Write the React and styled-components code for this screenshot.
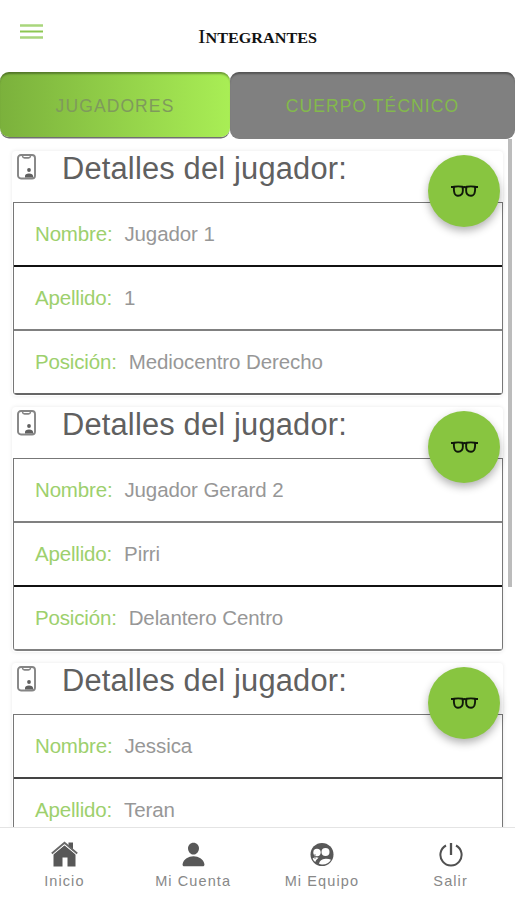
import React from 'react'
import styled, { createGlobalStyle } from 'styled-components'
import { IoPerson } from 'react-icons/io5'

const players = [
  { name: 'Jugador 1', surname: '1', position: 'Mediocentro Derecho', lines: ['#111', '#808080', '#666'] },
  { name: 'Jugador Gerard 2', surname: 'Pirri', position: 'Delantero Centro', lines: ['#808080', '#111', '#808080'] },
  { name: 'Jessica', surname: 'Teran', lines: ['#444', '#808080', '#666'] },
]

const MenuIcon = () => (
  <svg width="23" height="16" viewBox="0 0 23 16">
    <path d="M0 1.500h23M0 13.500h23" stroke="#a9d67c" strokeWidth="2.400" />
    <path d="M0 7.500h23" stroke="#8cc751" strokeWidth="2" />
  </svg>
)

const BadgeIcon = () => (
  <svg width="19" height="26" viewBox="0 0 19 26" fill="none" stroke="#858585">
    <rect x="1" y="1" width="17" height="23.500" rx="3" strokeWidth="1.900" />
    <path d="M5.500 2q.3 1.900 2 1.900h4q1.700 0 2-1.900" strokeWidth="1.600" />
    <circle cx="12" cy="16" r="1.900" fill="#606060" stroke="none" />
    <path d="M8 23.500v-1.500q0-2.600 4-2.600t4 2.600v1.500z" fill="#606060" stroke="none" />
  </svg>
)

const GlassesIcon = () => (
  <svg width="27" height="13" viewBox="0 0 27 13" fill="none" stroke="#10180a">
    <path d="M0 2h4M23 2h4" strokeWidth="2.200" />
    <path d="M3 1.800Q7 .9 11.400 1.800Q12.600 6.500 10.800 9.200Q9.500 10.800 7 10.800Q4.400 10.800 3.500 8.300Q2.600 5.500 3 1.800z" strokeWidth="1.900" />
    <path d="M24 1.800Q20 .9 15.600 1.800Q14.400 6.500 16.200 9.200Q17.500 10.800 20 10.800Q22.600 10.800 23.500 8.300Q24.400 5.500 24 1.800z" strokeWidth="1.900" />
    <path d="M11.500 2.700q2-1.200 4 0" strokeWidth="2" />
  </svg>
)

const HomeIcon = () => (
  <svg width="27" height="27" viewBox="0 0 27 27" fill="#585858">
    <path d="M17.500 1.500H22v9l-4.500-4z" />
    <path d="M2.500 13L13.500 4 24.500 13V25.500h-8v-9h-5v9h-9z" />
    <path d="M.8 14L13.500 3.500l12.700 10.500" fill="none" stroke="#fff" strokeWidth="1.200" />
    <path d="M.8 12.500L13.500 1.800l12.700 10.700" fill="none" stroke="#686868" strokeWidth="1.900" />
  </svg>
)

const TeamIcon = () => (
  <svg width="24" height="27" viewBox="0 0 24 27">
    <circle cx="12" cy="13.500" r="11.500" fill="#585858" />
    <circle cx="7" cy="11.500" r="3.700" fill="#fff" />
    <circle cx="15.500" cy="11" r="4" fill="#fff" />
    <path d="M2.600 17.500q2.500-1.900 6-.8q-2.600 2-3.400 4.300q-1.800-1.400-2.600-3.500z" fill="#fff" />
    <path d="M9 22.700q.8-4.500 6.500-5q3.300-.2 5.500 1.100q-3 5-9 4.700q-1.700 0-3-.8z" fill="#fff" />
    <path d="M5 13v5" stroke="#8a8a8a" strokeWidth="1" />
  </svg>
)

const PowerIcon = () => (
  <svg width="24" height="27" viewBox="0 0 24 27" fill="none" stroke="#505050" strokeWidth="2">
    <path d="M7 4.500a10.600 10.600 0 1 0 10 0" />
    <path d="M12 2v12" strokeWidth="2.300" />
  </svg>
)

export default function App() {
  return (
    <Screen>
      <GlobalStyle />
      <Header>
        <MenuButton><MenuIcon /></MenuButton>
        <Title>Integrantes</Title>
      </Header>
      <Tabs>
        <Tab $active>JUGADORES</Tab>
        <Tab>CUERPO TÉCNICO</Tab>
      </Tabs>
      <Content>
        {players.map(player => (
          <Card key={player.name}>
            <CardHeader>
              <BadgeIcon />
              <CardTitle>Detalles del jugador:</CardTitle>
            </CardHeader>
            <FabButton><GlassesIcon /></FabButton>
            <List>
              <Row $line={player.lines[0]}><Label>Nombre:</Label>{player.name}</Row>
              <Row $line={player.lines[1]}><Label>Apellido:</Label>{player.surname}</Row>
              {player.position && (
                <Row $line={player.lines[2]}><Label>Posición:</Label>{player.position}</Row>
              )}
            </List>
          </Card>
        ))}
        <ScrollThumb />
      </Content>
      <BottomNav>
        <NavItem><HomeIcon /><span>Inicio</span></NavItem>
        <NavItem><IoPerson size={27} /><span>Mi Cuenta</span></NavItem>
        <NavItem><TeamIcon /><span>Mi Equipo</span></NavItem>
        <NavItem><PowerIcon /><span>Salir</span></NavItem>
      </BottomNav>
    </Screen>
  )
}

const GlobalStyle = createGlobalStyle`
  * {
    box-sizing: border-box;
  }
  body {
    margin: 0;
    background: #fff;
    font-family: "Liberation Sans", Arial, sans-serif;
  }
`

const Screen = styled.div`
  display: flex;
  flex-direction: column;
  height: 900px;
  width: 515px;
  overflow: hidden;
`

const Header = styled.header`
  display: grid;
  grid-template-columns: 60px 1fr 60px;
  flex: none;
  height: 72px;
`

const MenuButton = styled.button`
  display: flex;
  align-items: flex-start;
  padding: 24px 0 0 20px;
  border: 0;
  background: none;
`

const Title = styled.h1`
  margin: 0;
  padding-top: 26px;
  text-align: center;
  white-space: nowrap;
  font: bold 19.5px/22px "Liberation Serif", serif;
  font-variant: small-caps;
  transform: scaleX(1.155);
  color: #111;
  &::first-letter {
    font-weight: 400;
  }
`

const Tabs = styled.div`
  display: grid;
  grid-template-columns: 230px 285px;
  flex: none;
  height: 67px;
`

const Tab = styled.button`
  border: 0;
  padding: ${props => (props.$active ? '2px' : '0')} 0 0;
  height: ${props => (props.$active ? '65px' : '67px')};
  border-radius: 9px;
  font: 400 17.5px/20px "Liberation Sans", Arial, sans-serif;
  letter-spacing: 1.1px;
  color: ${props => (props.$active ? '#7f9a5c' : '#83b94c')};
  background: ${props => (props.$active ? 'linear-gradient(90deg, #7bb13c, #a9ee55)' : '#808080')};
  box-shadow: ${props => (props.$active ? '0 2px 0 -0.5px #707070, ' : '')}inset 0 3px 2px -1px rgba(0, 0, 0, 0.35);
`

const Content = styled.main`
  position: relative;
  flex: 1;
  min-height: 0;
  overflow: hidden;
  padding: 12px 12px 0;
`

const Card = styled.section`
  position: relative;
  height: 245px;
  margin-bottom: 11px;
  border-radius: 4px;
  box-shadow: 0 0 4px rgba(0, 0, 0, 0.09);
`

const CardHeader = styled.div`
  display: flex;
  align-items: flex-start;
  height: 51px;
  padding: 3px 0 0 5px;
`

const CardTitle = styled.h2`
  margin: -2px 0 0 26px;
  font-size: 30.8px;
  line-height: 34px;
  font-weight: 400;
  letter-spacing: 0.2px;
  color: #606060;
`

const FabButton = styled.button`
  position: absolute;
  top: 4px;
  right: 3px;
  display: flex;
  align-items: center;
  justify-content: center;
  width: 72px;
  height: 72px;
  padding: 0;
  border: 0;
  border-radius: 50%;
  background: #88c540;
  box-shadow: 0 4px 9px rgba(0, 0, 0, 0.3);
`

const List = styled.div`
  margin: 0 0 0 1px;
  border: 1px solid #777;
  border-bottom: 0;
  border-radius: 0 0 4px 4px;
  overflow: hidden;
`

const Row = styled.div`
  height: 64px;
  padding: 19px 0 0 21px;
  border-bottom: 2px solid ${props => props.$line};
  font-size: 20.5px;
  line-height: 24px;
  letter-spacing: -0.1px;
  color: #979797;
`

const Label = styled.span`
  display: inline-block;
  margin-right: 12px;
  letter-spacing: -0.17px;
  color: #9dd06d;
`

const ScrollThumb = styled.div`
  position: absolute;
  top: 0;
  right: 3px;
  width: 4px;
  height: 448px;
  background: #bcbcbc;
`

const BottomNav = styled.nav`
  display: grid;
  grid-template-columns: repeat(4, 1fr);
  flex: none;
  height: 73px;
  border-top: 1px solid #e4e4e4;
  background: #fff;
`

const NavItem = styled.a`
  display: flex;
  flex-direction: column;
  align-items: center;
  padding-top: 13px;
  color: #585858;
  font-size: 14.5px;
  line-height: 18px;
  letter-spacing: 1.1px;
  svg {
    flex: none;
    height: 27px;
  }
  span {
    margin-top: 4px;
    color: #888;
  }
`
